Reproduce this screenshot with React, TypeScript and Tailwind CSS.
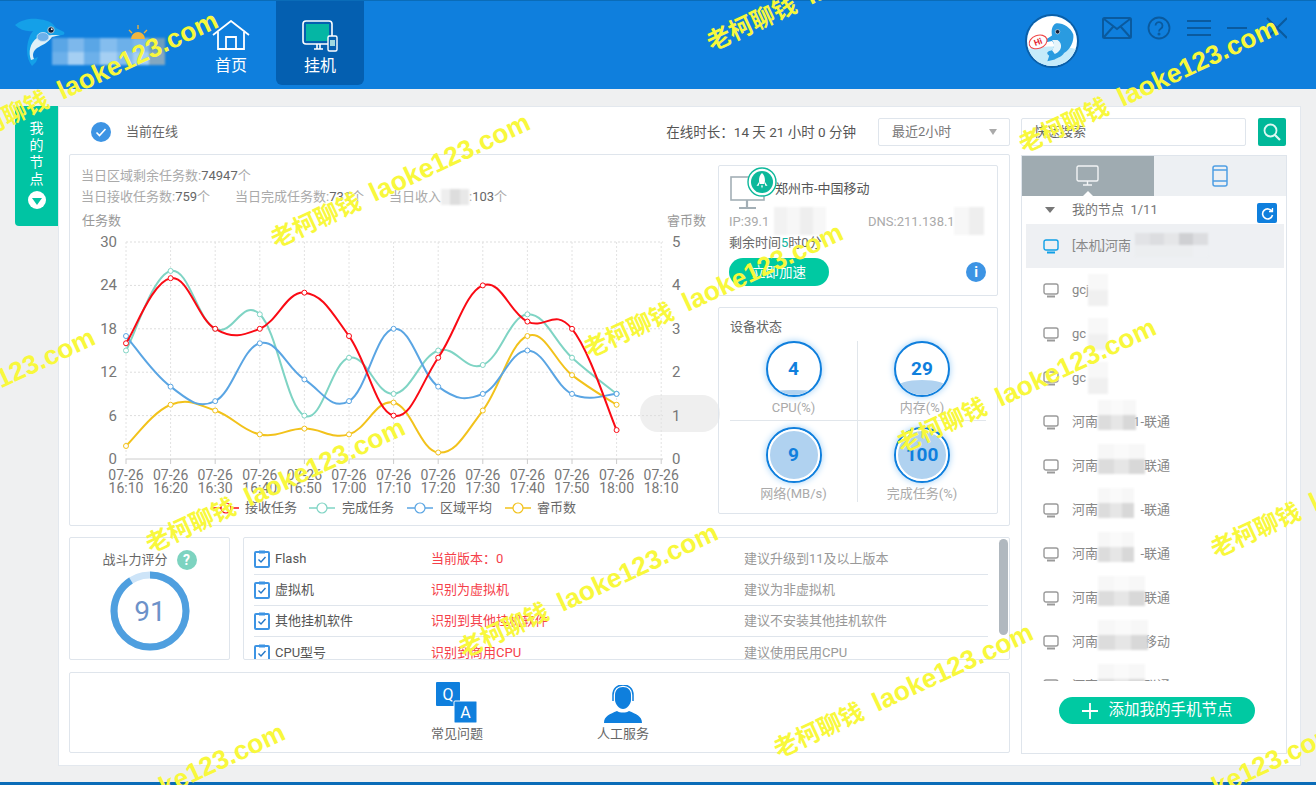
import React from "react";

const FONT = "font-['Roboto','Noto_Sans_CJK_SC',sans-serif]";

const X = (i: number) => 56 + 44.6 * i;
const Y = (v: number) => 251 - v * 7.233;

function smooth(vals: number[]) {
  const p = vals.map((v, i) => [X(i), Y(v)]);
  let d = `M${p[0][0]} ${p[0][1]}`;
  for (let i = 0; i < p.length - 1; i++) {
    const a = p[Math.max(i - 1, 0)], b = p[i], c = p[i + 1], e = p[Math.min(i + 2, p.length - 1)];
    const t = 0.2;
    const c1x = b[0] + (c[0] - a[0]) * t, c1y = b[1] + (c[1] - a[1]) * t;
    const c2x = c[0] - (e[0] - b[0]) * t, c2y = c[1] - (e[1] - b[1]) * t;
    d += ` C${c1x} ${c1y} ${c2x} ${c2y} ${c[0]} ${c[1]}`;
  }
  return d;
}

const SERIES = [
  { color: "#7fd4c4", vals: [15, 26, 18, 20, 6, 14, 9, 15, 13, 20, 14, 9] },
  { color: "#f2c21b", vals: [1.8, 7.5, 6.7, 3.4, 4.2, 3.4, 7.8, 0.9, 6.7, 17, 11.6, 7.5] },
  { color: "#5aa5e3", vals: [17, 10, 8, 16, 11, 8, 18, 10, 9, 15, 9, 9] },
  { color: "#fa0a14", vals: [16, 25, 18, 18, 23, 17, 6, 14, 24, 19, 18, 4] },
];
const TIMES = ["16:10", "16:20", "16:30", "16:40", "16:50", "17:00", "17:10", "17:20", "17:30", "17:40", "17:50", "18:00", "18:10"];
const LEGEND = [
  { x: 143, tx: 175, c: "#fa0a14", t: "接收任务" },
  { x: 239, tx: 272, c: "#7fd4c4", t: "完成任务" },
  { x: 337, tx: 370, c: "#5aa5e3", t: "区域平均" },
  { x: 435, tx: 467, c: "#f2c21b", t: "睿币数" },
];

function Chart() {
  return (
    <svg width="650" height="317" className="block overflow-visible" fill="#777">
      <rect x="570" y="187" width="80" height="37" rx="18" fill="#efefef" />
      <text x="12" y="17" fontSize="13" fill="#999">任务数</text>
      <text x="597" y="17" fontSize="13" fill="#999">睿币数</text>
      {[0, 1, 2, 3, 4, 5].map((k) => (
        <g key={k}>
          <line x1="56" x2="593" y1={Y(k * 6)} y2={Y(k * 6)} stroke={k === 0 ? "#ccc" : "#ddd"} strokeDasharray={k === 0 ? undefined : "2 2"} />
          <text x="47" y={Y(k * 6) + 5} fontSize="15" textAnchor="end">{k * 6}</text>
          <text x="602" y={Y(k * 6) + 5} fontSize="15">{k}</text>
        </g>
      ))}
      {TIMES.map((t, i) => (
        <g key={t}>
          <line x1={X(i)} x2={X(i)} y1={Y(30)} y2={Y(0)} stroke="#e2e2e2" strokeDasharray="2 2" />
          <line x1={X(i)} x2={X(i)} y1={Y(0)} y2={Y(0) + 5} stroke="#ccc" />
          <text x={X(i)} y="272" fontSize="14" textAnchor="middle">07-26</text>
          <text x={X(i)} y="285" fontSize="14" textAnchor="middle">{t}</text>
        </g>
      ))}
      {SERIES.map((s) => (
        <g key={s.color}>
          <path d={smooth(s.vals)} fill="none" stroke={s.color} strokeWidth="2" />
          {s.vals.map((v, i) => (
            <circle key={i} cx={X(i)} cy={Y(v)} r="2.5" fill="#fff" stroke={s.color} strokeWidth="1" />
          ))}
        </g>
      ))}
      {LEGEND.map((l) => (
        <g key={l.t}>
          <line x1={l.x} x2={l.x + 26} y1="300" y2="300" stroke={l.c} strokeWidth="1.5" />
          <circle cx={l.x + 13} cy="300" r="5" fill="#fff" stroke={l.c} strokeWidth="1.2" />
          <text x={l.tx} y="304" fontSize="13" fill="#666">{l.t}</text>
        </g>
      ))}
    </svg>
  );
}

function Mosaic({ cols, className }: { cols: string[][]; className: string }) {
  return (
    <span className={`absolute flex flex-col blur-[1px] ${className}`}>
      {cols.map((row, r) => (
        <span key={r} className="flex flex-1">
          {row.map((c, i) => (
            <span key={i} className="flex-1" style={{ background: c }} />
          ))}
        </span>
      ))}
    </span>
  );
}

function LogoDolphin({ className }: { className?: string }) {
  return (
    <svg viewBox="0 0 70 60" className={className}>
      <path d="M5 15 C12 9 22 8 28 9 C35 10 42 11 46 18 L54 22 C55 24 54 25 52 25 L42 27 C38 33 33 35 27 38 C22 41 21 45 23 49 L28 47 L26 52 L22 56 C19 52 17 47 17 41 C17 33 19 26 23 21 C17 22 10 20 5 15 Z" fill="#14a0e8" />
      <path d="M50 25 L42 27 C38 33 32 35 27 38 C23 41 22 45 24 49 L21 50 C18 42 20 33 27 28 C31 25 37 26 42 25 Z" fill="#dff0f8" />
      <ellipse cx="33" cy="27" rx="6" ry="4.500" fill="#6cb0ea" stroke="#cfe6f6" strokeWidth="0.8" />
      <circle cx="41" cy="20" r="3.200" fill="#12203a" stroke="#cfe8f5" strokeWidth="0.8" />
      <circle cx="41.800" cy="19.200" r="0.900" fill="#fff" />
    </svg>
  );
}

function Avatar() {
  return (
    <svg viewBox="0 0 54 54" className="w-full h-full block">
      <rect width="54" height="54" fill="#fff" />
      <path d="M0 36 C14 32 40 32 54 36 V54 H0 Z" fill="#c5ebfa" />
      <path d="M31 8 C38 7 47 12 50 20 C51 27 47 36 40 40 C38 44 33 45 30 47 L22 49 L24 43 C20 40 22 38 27 37 C30 33 30 30 27 27 L22 28 C19 28 19 26 21 25 L27 21 C26 15 27 10 31 8 Z" fill="#2a9be0" />
      <path d="M27 26 L33 26 C39 30 38 38 30 41 L27 37 C30 33 30 30 27 26 Z" fill="#e6f5fb" />
      <circle cx="33" cy="17" r="2.400" fill="#15203a" stroke="#fff" strokeWidth="0.600" />
      <ellipse cx="12" cy="28" rx="10" ry="7" fill="#fff" stroke="#f04848" strokeWidth="1.200" transform="rotate(-20 12 28)" />
      <text x="12" y="31" fontSize="9" fontWeight="700" fill="#e21c2c" textAnchor="middle" transform="rotate(-20 12 28)">Hi</text>
    </svg>
  );
}

function NodeIcon({ active }: { active?: boolean }) {
  const c = active ? "#0f9fe6" : "#9a9a9a";
  return (
    <svg width="16" height="15" viewBox="0 0 16 15" className="shrink-0">
      <rect x="1" y="1" width="14" height="10" rx="2" fill="none" stroke={c} strokeWidth="1.4" />
      <path d="M4 13.5h8" stroke={c} strokeWidth="2" />
    </svg>
  );
}

function ClipCheck() {
  return (
    <svg width="16" height="18" viewBox="0 0 16 18" className="shrink-0">
      <rect x="1" y="2" width="14" height="15" rx="1" fill="#fff" stroke="#3d94e4" strokeWidth="2" />
      <rect x="5" y="0.5" width="6" height="3" fill="#3d94e4" />
      <path d="M4.5 9.5l2.5 2.5 4.5-5" fill="none" stroke="#2578c8" strokeWidth="1.4" />
    </svg>
  );
}

function Gauge({ v, level, label, full }: { v: string; level: string; label: string; full?: boolean }) {
  return (
    <div className="flex flex-col items-center">
      <div className="relative w-[56px] h-[56px] rounded-full border-2 border-[#0f7fdd] bg-white shadow-[0_0_7px_#9fd0f7] overflow-hidden">
        <div className={`absolute left-0 right-0 bottom-0 bg-[#b0d2f0] ${full ? "top-0 border-2 border-white rounded-full" : "rounded-t-[50%]"} ${level}`} />
        <div className="absolute inset-0 flex items-center justify-center text-[19px] font-bold text-[#0f7fdd]">{v}</div>
      </div>
      <div className="mt-[3px] text-[13px] leading-[16px] text-[#aaa]">{label}</div>
    </div>
  );
}

const CHECKS = [
  ["Flash", "当前版本：0", "建议升级到11及以上版本"],
  ["虚拟机", "识别为虚拟机", "建议为非虚拟机"],
  ["其他挂机软件", "识别到其他挂机软件", "建议不安装其他挂机软件"],
  ["CPU型号", "识别到商用CPU", "建议使用民用CPU"],
];

const NODES: { t: string; tail?: string; m?: string; active?: boolean }[] = [
  { t: "[本机]河南", active: true },
  { t: "gcj" },
  { t: "gc" },
  { t: "gc" },
  { t: "河南", tail: "1-联通", m: "w-[38px]" },
  { t: "河南", tail: "联通", m: "w-[47px]" },
  { t: "河南", tail: "-联通", m: "w-[36px]" },
  { t: "河南", tail: "-联通", m: "w-[36px]" },
  { t: "河南", tail: "联通", m: "w-[47px]" },
  { t: "河南", tail: "移动", m: "w-[50px]" },
  { t: "河南", tail: "联通", m: "w-[47px]" },
];

const MARKS = [
  "left-[-40px] top-[120px]",
  "left-[272px] top-[222px]",
  "left-[585px] top-[332px]",
  "left-[-163px] top-[437px]",
  "left-[708px] top-[25px]",
  "left-[1020px] top-[127px]",
  "left-[898px] top-[427px]",
  "left-[147px] top-[527px]",
  "left-[460px] top-[632px]",
  "left-[775px] top-[732px]",
  "left-[1212px] top-[532px]",
  "left-[27px] top-[832px]",
  "left-[1080px] top-[832px]",
];

function Watermark({ className }: { className: string }) {
  return (
    <div className={`absolute h-[36px] leading-[36px] origin-left rotate-[-25deg] whitespace-nowrap font-bold text-[#f8f83c] pointer-events-none ${className}`}>
      <span className="text-[24px]">老柯聊钱</span>
      <span className="ml-[13px] text-[26.5px] font-['Liberation_Sans',sans-serif]">laoke123.com</span>
    </div>
  );
}

export default function App() {
  return (
    <div className={`relative w-[1316px] h-[785px] overflow-hidden bg-[#eff0f1] flex flex-col ${FONT}`}>
      {/* header */}
      <header className="h-[89px] shrink-0 bg-[#0f7fdd] border-t border-[#0a6cb8] flex items-start text-white relative">
        <div className="relative w-[204px] h-[85px] shrink-0">
          <LogoDolphin className="absolute left-[10px] top-[9px] w-[70px] h-[60px]" />
          <Mosaic className="left-[52px] top-[37px] w-[113px] h-[27px] rounded-l-[12px]" cols={[["#5aa6e6", "#7db8ec", "#5aa6e6", "#84bdee", "#6cb0ea", "#7db8ec", "#6c9ec0"], ["#6cb0ea", "#a5cff3", "#6cb0ea", "#a5cff3", "#84bdee", "#a5cff3", "#84a8c0"]]} />
          <svg width="24" height="16" viewBox="0 0 24 16" className="absolute left-[126px] top-[24px]">
            <path d="M5 14a7 7 0 0 1 14 0z" fill="#f0b540" />
            <path d="M12 0v4M3 5l3 3M21 5l-3 3" stroke="#e8b040" strokeWidth="1.4" />
          </svg>
        </div>
        <div className="w-[54px] mr-[18px] pt-[19px] flex flex-col items-center">
          <svg width="38" height="31" viewBox="0 0 38 31" fill="none" stroke="#fff" strokeWidth="1.8">
            <path d="M1 15 L19 1 L37 15" />
            <path d="M6 12 V29 H32 V12" />
            <path d="M14 29 V17 H24 V29" />
          </svg>
          <div className="text-[16px] leading-[20px] mt-[5px]">首页</div>
        </div>
        <div className="w-[88px] h-[84px] bg-[#045fb0] rounded-b-[6px] pt-[19px] flex flex-col items-center">
          <svg width="36" height="32" viewBox="0 0 36 32" fill="none">
            <rect x="1" y="1" width="29" height="23" rx="3" stroke="#fff" strokeWidth="1.6" />
            <rect x="4" y="4" width="23" height="17" fill="#05b6a4" />
            <path d="M12 29h9M15 24v5M18 24v5" stroke="#fff" strokeWidth="1.6" />
            <rect x="26" y="16" width="9" height="15" rx="1.5" fill="#045fb0" stroke="#fff" strokeWidth="1.4" />
            <rect x="28" y="20" width="5" height="6" fill="#9fd8e0" />
          </svg>
          <div className="text-[16px] leading-[20px] mt-[4px]">挂机</div>
        </div>
        <div className="ml-auto mr-[29px] flex items-start pt-[14px]">
          <div className="w-[54px] h-[54px] rounded-full border-2 border-[#0a5fa8] overflow-hidden mr-[23px] mt-[-1px]">
            <Avatar />
          </div>
          <svg width="30" height="22" viewBox="0 0 30 22" fill="none" stroke="#0a5a9e" strokeWidth="2" className="mt-[2px]">
            <rect x="1" y="1" width="28" height="20" rx="1.5" />
            <path d="M2 2 L15 12 L28 2 M2 20 L11 10 M28 20 L19 10" />
          </svg>
          <svg width="24" height="24" viewBox="0 0 24 24" fill="none" stroke="#0a5a9e" strokeWidth="1.8" className="ml-[15px] mt-[1px]">
            <circle cx="12" cy="12" r="10.5" />
            <path d="M8.5 9.5 a3.5 3.5 0 1 1 5.5 3 c-1.5 1-2 1.6-2 3" />
            <circle cx="12" cy="18" r="0.6" />
          </svg>
          <svg width="24" height="18" viewBox="0 0 24 18" stroke="#0a5a9e" strokeWidth="2" className="ml-[16px] mt-[4px]">
            <path d="M0 2h24M0 9h24M0 16h24" />
          </svg>
          <svg width="60" height="22" viewBox="0 0 60 22" stroke="#0a5a9e" strokeWidth="2" className="ml-[16px] mt-[2px]">
            <path d="M0 11h20M40 1l20 20M60 1L40 21" />
          </svg>
        </div>
      </header>

      {/* body */}
      <main className="flex-1 flex items-start pl-[15px] pt-[17px]">
        <aside className="w-[43px] h-[120px] shrink-0 bg-[#00c4a3] rounded-l-[4px] flex flex-col items-center pt-[14px] text-white text-[14px] leading-[17px]">
          <span>我</span>
          <span>的</span>
          <span>节</span>
          <span>点</span>
          <span className="mt-[3px] w-[18px] h-[18px] rounded-full bg-white flex items-center justify-center">
            <span className="w-0 h-0 border-x-[5px] border-x-transparent border-t-[7px] border-t-[#00c4a3] mt-[2px]" />
          </span>
        </aside>

        <section className="w-[1243px] h-[660px] bg-white border border-[#e3e8ee] flex pt-[11px] pl-[10px] gap-[11px]">
          {/* left column */}
          <div className="w-[941px] shrink-0 flex flex-col">
            <div className="h-[28px] flex items-center text-[13px] text-[#666] relative">
              <svg width="20" height="20" viewBox="0 0 20 20" className="ml-[22px]">
                <circle cx="10" cy="10" r="10" fill="#3d94e4" />
                <path d="M5.5 10.5l3 3 6-6.5" fill="none" stroke="#fff" strokeWidth="1.6" />
              </svg>
              <span className="ml-[15px]">当前在线</span>
              <span className="ml-auto mr-[22px] text-[13.5px] text-[#555]">在线时长：14 天 21 小时 0 分钟</span>
              <div className="w-[132px] h-[28px] border border-[#dfe5ec] rounded-[2px] flex items-center pl-[13px] pr-[12px] text-[#777] text-[13px]">
                <span>最近2小时</span>
                <span className="ml-auto w-0 h-0 border-x-[4px] border-x-transparent border-t-[6px] border-t-[#aaa]" />
              </div>
            </div>

            {/* chart card */}
            <div className="mt-[8px] h-[372px] border border-[#dfe5ec] rounded-[2px] flex">
              <div className="w-[648px] shrink-0">
                <div className="pl-[11px] pt-[10px] h-[53px] text-[13px] leading-[21px] text-[#aaa]">
                  <div>当日区域剩余任务数:<span className="text-[#666]">74947</span>个</div>
                  <div className="relative flex">
                    <span className="w-[154px]">当日接收任务数:<span className="text-[#666]">759</span>个</span>
                    <span className="w-[154px]">当日完成任务数:<span className="text-[#666]">731</span>个</span>
                    <span>当日收入<span className="inline-block w-[28px]" />:<span className="text-[#666]">103</span>个</span>
                    <Mosaic className="left-[360px] top-[3px] w-[28px] h-[16px]" cols={[["#eee", "#ddd", "#e8e8e8"]]} />
                  </div>
                </div>
                <Chart />
              </div>
              <div className="w-[280px] shrink-0 pt-[10px] flex flex-col gap-[11px]">
                <div className="relative h-[131px] border border-[#dfe5ec] rounded-[2px] pl-[10px] text-[13px]">
                  <svg width="36" height="34" viewBox="0 0 36 34" fill="none" stroke="#a3afb6" strokeWidth="1.6" className="absolute left-[11px] top-[10px]">
                    <rect x="1" y="1" width="33" height="23" />
                    <path d="M17 24v7M9 32h17" strokeWidth="2.2" />
                  </svg>
                  <svg width="30" height="30" viewBox="0 0 30 30" className="absolute left-[28px] top-[1px]">
                    <circle cx="15" cy="15" r="14" fill="#fff" stroke="#0db89b" strokeWidth="1.4" />
                    <circle cx="15" cy="15" r="11" fill="#0db89b" />
                    <path d="M15 6c3 2.5 3.5 7 2.5 11h-5C11.500 13 12 8.500 15 6zM12 15l-2.500 4 2.500-.5zM18 15l2.500 4-2.500-.5zM14 18.500h2l-1 3z" fill="#fff" />
                  </svg>
                  <div className="pl-[46px] pt-[13px] leading-[20px] text-[#555]">郑州市-中国移动</div>
                  <div className="relative mt-[13px] h-[20px] leading-[20px] text-[#aaa] flex">
                    <span className="w-[139px]">IP:39.1</span>
                    <span>DNS:211.138.1</span>
                    <Mosaic className="left-[45px] top-[-5px] w-[52px] h-[28px] rounded-[6px]" cols={[["#f2f2f2", "#f7f7f7", "#eee", "#f7f7f7"]]} />
                    <Mosaic className="left-[225px] top-[-5px] w-[30px] h-[28px] rounded-[12px]" cols={[["#f7f7f7", "#eee"]]} />
                  </div>
                  <div className="mt-[1px] leading-[20px] text-[#666]">剩余时间<span className="text-[#12b5a0]">5</span>时0分</div>
                  <button className="mt-[5px] w-[100px] h-[28px] rounded-full bg-[#00c9a2] text-white text-[13.5px] block">立即加速</button>
                  <div className="absolute right-[11px] bottom-[13px] w-[20px] h-[20px] rounded-full bg-[#3d94e4] text-white text-[14px] font-bold leading-[20px] text-center">i</div>
                </div>
                <div className="relative h-[207px] border border-[#dfe5ec] rounded-[2px]">
                  <div className="pl-[11px] pt-[9px] leading-[20px] text-[13px] text-[#666]">设备状态</div>
                  <div className="grid grid-cols-2 grid-rows-[80px_81px] px-[11px] mt-[4px] w-[278px]">
                    <div className="border-r border-b border-[#e1e6eb]"><Gauge v="4" level="h-[5px]" label="CPU(%)" /></div>
                    <div className="border-b border-[#e1e6eb]"><Gauge v="29" level="h-[15px]" label="内存(%)" /></div>
                    <div className="pt-[6px] border-r border-[#e1e6eb]"><Gauge v="9" level="h-full" label="网络(MB/s)" full /></div>
                    <div className="pt-[6px]"><Gauge v="100" level="h-full" label="完成任务(%)" full /></div>
                  </div>
                </div>
              </div>
            </div>

            {/* score + checks */}
            <div className="mt-[11px] h-[123px] flex gap-[13px]">
              <div className="w-[161px] shrink-0 border border-[#dfe5ec] rounded-[2px] pt-[12px] flex flex-col items-center">
                <div className="flex items-center text-[13px] leading-[20px] text-[#666]">
                  战斗力评分
                  <span className="ml-[9px] w-[20px] h-[20px] rounded-full bg-[#7dd3c0] text-white text-[14px] font-bold text-center leading-[20px]">?</span>
                </div>
                <svg width="80" height="80" viewBox="0 0 80 80" className="mt-[1px]">
                  <circle cx="40" cy="40" r="36" fill="none" stroke="#cde4f8" strokeWidth="7" />
                  <circle cx="40" cy="40" r="36" fill="none" stroke="#4f9fdf" strokeWidth="7" strokeDasharray="205.800 226.200" transform="rotate(-90 40 40)" />
                  <text x="40" y="50" textAnchor="middle" fontSize="28" fill="#6d92c9">91</text>
                </svg>
              </div>
              <div className="relative flex-1 border border-[#dfe5ec] rounded-[2px] overflow-hidden pl-[10px] pr-[21px]">
                {CHECKS.map(([a, b, c], i) => (
                  <div key={a} className={`h-[31px] flex items-center text-[13px] ${i < 3 ? "border-b border-[#dfe5ec]" : ""} ${i === 0 ? "mt-[6px]" : ""}`}>
                    <ClipCheck />
                    <span className="ml-[5px] w-[156px] text-[#555]">{a}</span>
                    <span className="w-[313px] text-[#f5404a]">{b}</span>
                    <span className="text-[#999]">{c}</span>
                  </div>
                ))}
                <div className="absolute right-[1px] top-[1px] w-[9px] h-[96px] rounded-full bg-[#b0b8bf]" />
              </div>
            </div>

            {/* help */}
            <div className="mt-[12px] h-[81px] border border-[#dfe5ec] rounded-[2px] flex pl-[341px] pt-[9px] text-[13px] text-[#666]">
              <div className="w-[92px] flex flex-col items-center">
                <svg width="42" height="41" viewBox="0 0 42 41">
                  <rect x="0" y="0" width="24" height="24" rx="1" fill="#0f7fdd" />
                  <rect x="18" y="19" width="23" height="22" rx="1" fill="#0f7fdd" stroke="#fff" />
                  <text x="12" y="18" fontSize="16" fill="#fff" textAnchor="middle">Q</text>
                  <text x="29.500" y="36" fontSize="16" fill="#fff" textAnchor="middle">A</text>
                </svg>
                <span className="leading-[20px] mt-[1px]">常见问题</span>
              </div>
              <div className="ml-[74px] w-[92px] flex flex-col items-center">
                <svg width="38" height="38" viewBox="0 0 38 38" className="mt-[3px]" fill="#0f7fdd">
                  <path d="M19 2c5 0 8 3.500 8 8v5c0 4-4 9-8 9s-8-5-8-9v-5c0-4.500 3-8 8-8z" />
                  <path d="M9 16v-6C9 4 13 0 19 0s10 4 10 10v6" fill="none" stroke="#0f7fdd" strokeWidth="1.500" />
                  <path d="M0 38c0-7 6-9 13-12 3 2 9 2 12 0 7 3 13 5 13 12z" />
                </svg>
                <span className="leading-[20px] mt-[1px]">人工服务</span>
              </div>
            </div>
          </div>

          {/* right column */}
          <div className="w-[266px] shrink-0 flex flex-col">
            <div className="h-[28px] flex">
              <div className="w-[225px] h-[28px] border border-[#dfe5ec] rounded-[2px] pl-[12px] flex items-center text-[13px] text-[#666]">快速搜索</div>
              <div className="ml-[12px] w-[28px] h-[28px] rounded-[2px] bg-[#00b899] flex items-center justify-center">
                <svg width="20" height="20" viewBox="0 0 20 20" fill="none" stroke="#dff7f2" strokeWidth="1.800">
                  <circle cx="8.500" cy="8.500" r="6" />
                  <path d="M13 13l5 5" strokeWidth="2.200" />
                </svg>
              </div>
            </div>
            <div className="mt-[9px] h-[599px] border border-[#dfe5ec] flex flex-col">
              <div className="h-[40px] shrink-0 flex relative">
                <div className="w-[132px] bg-[#9fabb1] flex items-center justify-center relative">
                  <svg width="24" height="22" viewBox="0 0 24 22" fill="none" stroke="#f2f4f5" strokeWidth="1.400">
                    <rect x="1" y="1" width="21" height="15" rx="1.500" />
                    <path d="M11.500 16v4M7 20h9" />
                  </svg>
                  <span className="absolute bottom-0 left-1/2 -translate-x-1/2 w-0 h-0 border-x-[5px] border-x-transparent border-b-[5px] border-b-white" />
                </div>
                <div className="flex-1 bg-[#edf0f3] flex items-center justify-center">
                  <svg width="16" height="22" viewBox="0 0 16 22" fill="none" stroke="#4f9fe4" strokeWidth="1.500">
                    <rect x="1" y="1" width="14" height="20" rx="2" />
                    <path d="M1 5h14M1 16h14" />
                  </svg>
                </div>
              </div>
              <div className="h-[28px] shrink-0 flex items-center pl-[23px] pr-[9px] text-[13px] text-[#777] relative">
                <span className="w-0 h-0 border-x-[5px] border-x-transparent border-t-[6px] border-t-[#777]" />
                <span className="ml-[17px]">我的节点&nbsp;&nbsp;1/11</span>
                <span className="ml-auto mt-[6px] w-[20px] h-[20px] rounded-[2px] bg-[#0f7fdd] flex items-center justify-center">
                  <svg width="13" height="13" viewBox="0 0 13 13" fill="none" stroke="#fff" strokeWidth="1.600">
                    <path d="M11 4.500A5 5 0 1 0 11.500 8" />
                    <path d="M8 4.500h3.500V1" strokeWidth="1.300" />
                  </svg>
                </span>
              </div>
              <div className="h-[457px] shrink-0 overflow-hidden pl-[4px] pr-[2px]">
                {NODES.map((n, i) => (
                  <div key={i} className={`relative h-[44px] shrink-0 flex items-center pl-[17px] text-[13px] text-[#888] ${n.active ? "bg-[#eef0f3]" : ""}`}>
                    <NodeIcon active={n.active} />
                    <span className="ml-[13px]">{n.t}</span>
                    {n.tail && <span className="w-[72px] text-right">{n.tail}</span>}
                    {n.active && <Mosaic className="left-[109px] top-[9px] w-[73px] h-[24px] rounded-[8px]" cols={[["#e2e3e6", "#dcdde0", "#e5e6e8", "#cfd0d3", "#dcdde0"], ["#eceef0", "#eceef0", "#eceef0", "#eceef0", "#eef0f3"]]} />}
                    {!n.active && !n.tail && <Mosaic className="left-[62px] top-[6px] w-[20px] h-[32px] rounded-[8px]" cols={[["#f8f8f8"], ["#f0f0f0"]]} />}
                    {n.tail && <Mosaic className={`left-[72px] top-[0px] h-[30px] ${n.m}`} cols={[["#f7f7f7", "#fafafa", "#f7f7f7"], ["#dcdcdc", "#e6e6e6", "#d8d8d8"]]} />}
                  </div>
                ))}
              </div>
              <button className="mt-[16px] ml-[37px] w-[196px] h-[27px] rounded-full bg-[#00c9a2] text-white text-[15.5px] flex items-center justify-center">
                <svg width="18" height="18" viewBox="0 0 18 18" stroke="#fff" strokeWidth="1.800" className="mr-[9px]">
                  <path d="M9 1v16M1 9h16" />
                </svg>
                添加我的手机节点
              </button>
            </div>
          </div>
        </section>
      </main>
      <div className="h-[3px] shrink-0 bg-[#0a6cb8]" />

      {MARKS.map((m) => (
        <Watermark key={m} className={m} />
      ))}
    </div>
  );
}
